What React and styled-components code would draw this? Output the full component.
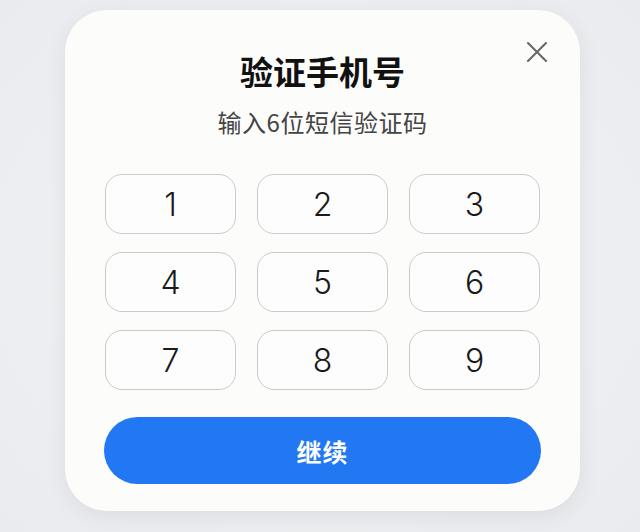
import React from 'react';
import styled, { createGlobalStyle } from 'styled-components';

const Global = createGlobalStyle`
  html, body {
    margin: 0;
    padding: 0;
    background: #eef0f3;
    font-family: "Noto Sans CJK SC", "Noto Sans", sans-serif;
  }
`;

const Page = styled.div`
  width: 640px;
  height: 532px;
  display: flex;
  justify-content: center;
  padding: 10px 0 0 5px;
  box-sizing: border-box;
  background: radial-gradient(ellipse at center, #f4f5f7 0%, #e9ebee 100%);
`;

const Card = styled.div`
  position: relative;
  width: 515px;
  height: 501px;
  box-sizing: border-box;
  background: #fcfcfb;
  border-radius: 42px;
  box-shadow: 0 6px 24px rgba(0, 0, 0, 0.07);
  padding: 40px 40px 0 40px;
  display: flex;
  flex-direction: column;
  align-items: center;
`;

const Close = styled.button`
  position: absolute;
  top: 28px;
  right: 29px;
  width: 28px;
  height: 28px;
  border: none;
  background: none;
  padding: 0;
  cursor: pointer;
  display: flex;
  align-items: center;
  justify-content: center;
`;

const Title = styled.h1`
  margin: 0;
  font-size: 33px;
  line-height: 42px;
  font-weight: 700;
  color: #111;
`;

const Subtitle = styled.p`
  margin: 14px 0 0;
  font-size: 24px;
  line-height: 32px;
  letter-spacing: 0.5px;
  color: #444;
`;

const Grid = styled.div`
  margin-top: 36px;
  width: 100%;
  display: grid;
  grid-template-columns: repeat(3, 1fr);
  column-gap: 21px;
  row-gap: 18px;
`;

const Key = styled.button`
  height: 60px;
  border: 1.5px solid #cbcbcb;
  border-radius: 17px;
  background: #fdfdfd;
  font-family: "Inter", "Noto Sans", sans-serif;
  font-size: 32px;
  font-weight: 300;
  color: #1a1a1a;
  display: flex;
  align-items: center;
  justify-content: center;
  padding: 0;
`;

const Continue = styled.button`
  margin-top: 27px;
  width: calc(100% + 2px);
  height: 67px;
  border: none;
  border-radius: 34px;
  background: #2277f2;
  color: #fff;
  font-family: "Noto Sans CJK SC", sans-serif;
  font-size: 25px;
  font-weight: 700;
  letter-spacing: 1px;
`;

const keys = [1, 2, 3, 4, 5, 6, 7, 8, 9];

export default function App() {
  return (
    <>
      <Global />
      <Page>
        <Card>
          <Close aria-label="关闭">
            <svg width="20" height="20" viewBox="0 0 20 20">
              <path d="M1 1 L19 19 M19 1 L1 19" stroke="#666" strokeWidth="2" strokeLinecap="round" />
            </svg>
          </Close>
          <Title>验证手机号</Title>
          <Subtitle>输入6位短信验证码</Subtitle>
          <Grid>
            {keys.map(k => (
              <Key key={k}>{k}</Key>
            ))}
          </Grid>
          <Continue>继续</Continue>
        </Card>
      </Page>
    </>
  );
}
